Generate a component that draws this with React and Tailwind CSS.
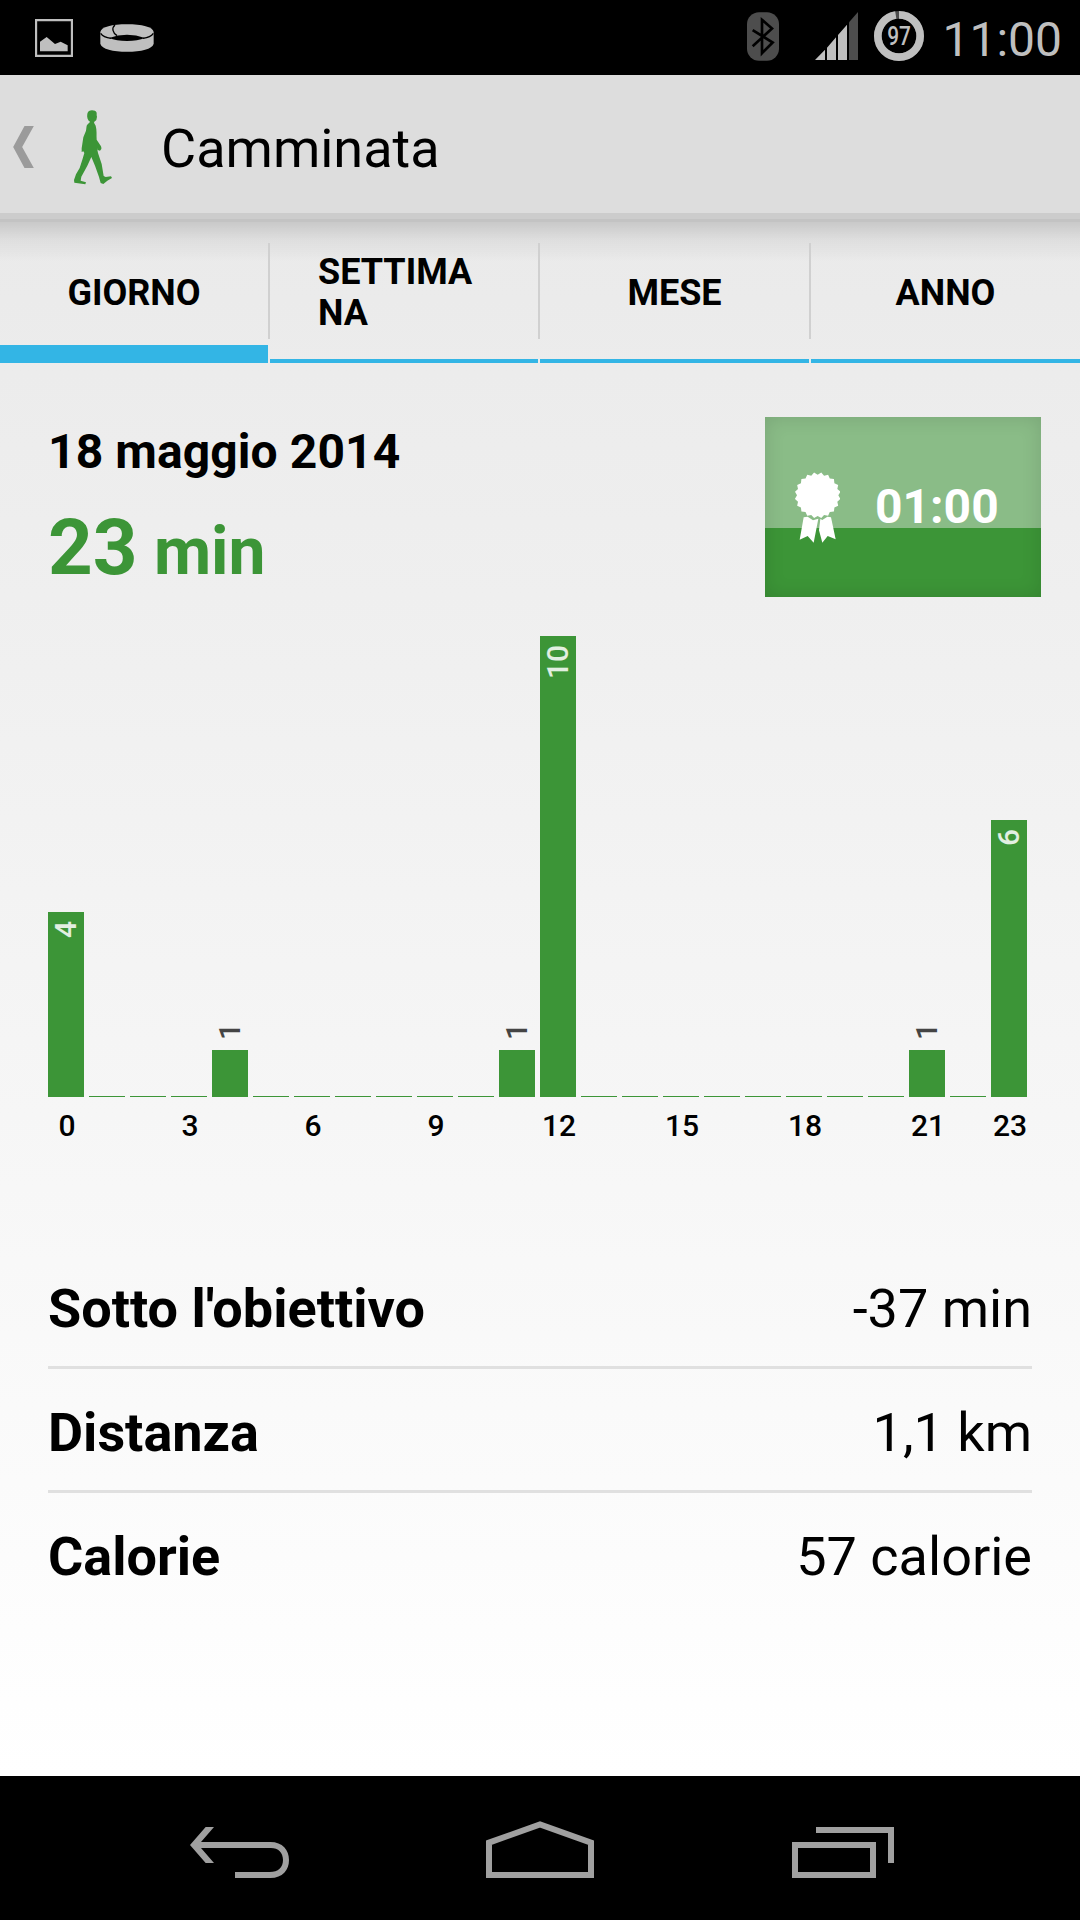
const minutesPerHour = [4, 0, 0, 0, 1, 0, 0, 0, 0, 0, 0, 1, 10, 0, 0, 0, 0, 0, 0, 0, 0, 1, 0, 6];
const axisHours = [0, 3, 6, 9, 12, 15, 18, 21, 23];
const UNIT = 46.1; // px per minute

const tabs = ["GIORNO", "SETTIMANA", "MESE", "ANNO"];

const details = [
  { label: "Sotto l'obiettivo", value: "-37 min" },
  { label: "Distanza", value: "1,1 km" },
  { label: "Calorie", value: "57 calorie" },
];

// Status bar icons
const PictureIcon = () => (
  <svg className="w-[38px] h-[38px]" viewBox="0 0 114 114">
    <path d="M3 3H111V111H3Z" fill="none" stroke="#bfbfbf" strokeWidth="7" />
    <path d="M15 68 35 54 60 75 77 68 98 79V97H15Z" fill="#bfbfbf" />
  </svg>
);

const BandIcon = () => (
  <svg className="w-[54px] h-[28px]" viewBox="299 75 162 84">
    <path d="M300 99C302 84 336 76 380 76S458 84 460 99V134C456 150 422 158 380 158S304 150 300 134Z" fill="#bfbfbf" />
    <path d="M326 117Q380 98 434 117Q412 126 380 126T326 117Z" fill="#000" />
    <path d="M301 103Q309 115 332 118M459 103Q451 115 428 118M344 78C333 87 337 102 350 110" fill="none" stroke="#000" strokeWidth="4" />
  </svg>
);

const BluetoothIcon = () => (
  <svg className="w-[32px] h-[49px]" viewBox="81 36 96 146">
    <rect x="81" y="36" width="96" height="146" rx="36" fill="#4d4d4d" />
    <path d="M98 90 158 127 126 159V59L156 85 98 138" fill="none" stroke="#000" strokeWidth="8" />
  </svg>
);

const SignalIcon = () => (
  <svg className="w-[43px] h-[48px]" viewBox="285 36 129 144">
    <path d="M285 180 315 149V180ZM321 180V143L348 112V180ZM354 180V105L381 74V180Z" fill="#bfbfbf" />
    <path d="M387 180V67L414 36V180Z" fill="#4d4d4d" />
  </svg>
);

const BatteryIcon = () => (
  <svg className="w-[50px] h-[50px]" viewBox="0 0 150 150">
    <circle cx="75" cy="75" r="63.5" fill="none" stroke="#4d4d4d" strokeWidth="23" />
    <circle
      cx="75"
      cy="75"
      r="63.5"
      fill="none"
      stroke="#bfbfbf"
      strokeWidth="23"
      pathLength="100"
      strokeDasharray="97 3"
      transform="rotate(-90 75 75)"
    />
    <text
      x="75"
      y="102"
      textAnchor="middle"
      textLength="71"
      lengthAdjust="spacingAndGlyphs"
      fontFamily="Roboto"
      fontSize="76"
      fontWeight="500"
      fill="#bfbfbf"
    >
      97
    </text>
  </svg>
);

// Header icons
const UpIcon = () => (
  <svg className="w-[21px] h-[42px]" viewBox="39 378 62 126">
    <path d="M73 378H101L66 441 101 504H73L39 441Z" fill="#9b9b9b" />
  </svg>
);

const WalkIcon = () => (
  <svg className="w-[38px] h-[75px]" viewBox="222 329 114 225" fill="#3c9537">
    <path d="M262 340C264 333 269 330 276 330C283 330 288 332 290 337L290 345 291 349 289 359C286 363 283 363 282 367L287 376C291 390 289 404 290 418L300 433C303 437 305 441 304 446L300 451 293 449 291 443 294 458 305 491 311 527 317 530 333 528 336 533 322 541 310 551 302 548 297 530 285 496 274 470 262 496 244 529 242 541 258 546 256 552 223 547 222 539 228 522 239 503 247 478 253 458 250 453 245 455 245 444 250 411 258 391 260 376C263 370 268 368 270 364C263 360 260 350 262 340Z" />
  </svg>
);

// Scalloped rosette outline
const rosette = Array.from({ length: 40 }, (_, i) => {
  const angle = (i * Math.PI) / 20 - Math.PI / 2;
  const r = i % 2 ? 69 : 62;
  return `${(233 + r * Math.cos(angle)).toFixed(1)},${(286 + r * Math.sin(angle)).toFixed(1)}`;
}).join(" ");

const BadgeIcon = () => (
  <svg className="w-[45px] h-[71px]" viewBox="165 216 135 213" fill="#fff">
    <polygon points={rosette} />
    <path d="M191 352 203 350 219 361 235 356 221 428 203 408 179 419Z" />
    <path d="M241 357 247 360 262 350 273 352 287 418 263 408 247 428 237 391Z" />
  </svg>
);

// Navigation bar icons
const BackIcon = () => (
  <svg className="w-[99px] h-[51px]" viewBox="90 201 297 153" fill="#a0a0a0">
    <path d="M90 255 137 201H162L123 246H331C368 246 387 270 387 300S368 354 331 354H225V336H329C355 336 369 322 369 300S355 264 333 264H123L162 309H137Z" />
  </svg>
);

const HomeIcon = () => (
  <svg className="w-[108px] h-[57px]" viewBox="978 183 324 171">
    <path d="M987 248 1140 193 1293 248V345H987Z" fill="none" stroke="#a0a0a0" strokeWidth="18" />
  </svg>
);

const RecentsIcon = () => (
  <svg className="w-[102px] h-[51px]" viewBox="276 201 306 153" fill="none" stroke="#a0a0a0" strokeWidth="18">
    <path d="M285 255H519V345H285ZM348 210H573V309" />
  </svg>
);

const Bar = ({ value }) => {
  const inside = value > 1;
  return (
    <div className="flex flex-col items-center w-9">
      {value > 0 && !inside && (
        <span className="mb-[10px] rotate-180 [writing-mode:vertical-rl] leading-9 text-[#444]">{value}</span>
      )}
      <div
        className="flex items-start justify-center w-full bg-[#3c9537]"
        style={{ height: Math.max(1, Math.ceil(value * UNIT)), paddingTop: inside ? 9 : 0 }}
      >
        {inside && <span className="rotate-180 [writing-mode:vertical-rl] leading-9 text-white/85">{value}</span>}
      </div>
    </div>
  );
};

export default function App() {
  return (
    <div className="flex flex-col w-[1080px] h-[1920px] bg-black font-[Roboto,sans-serif] text-black overflow-hidden">
      {/* Status bar */}
      <div className="flex items-start h-[75px] shrink-0 pl-[35px] pr-[18px]">
        <div className="flex items-center gap-[27px] pt-[19px]">
          <PictureIcon />
          <BandIcon />
        </div>
        <div className="flex items-start ml-auto pt-[11px]">
          <div className="mt-px mr-[36px]">
            <BluetoothIcon />
          </div>
          <div className="mt-px mr-[16px]">
            <SignalIcon />
          </div>
          <BatteryIcon />
          <span className="ml-[18px] mt-[4px] text-5xl leading-[50px] text-[#bfbfbf]">11:00</span>
        </div>
      </div>

      {/* Action bar */}
      <header className="flex items-center h-[147px] shrink-0 pl-[13px] pb-[3px] bg-[linear-gradient(#ddd_138px,#ccc_138px,#ccc_144px,#c3c3c3_144px)]">
        <UpIcon />
        <div className="ml-[40px]">
          <WalkIcon />
        </div>
        <h1 className="ml-[49px] pt-[4px] text-[54px] leading-[60px]">Camminata</h1>
      </header>

      <main className="flex flex-col flex-1 bg-linear-to-b from-[#eaeaea] to-white">
        {/* Tabs */}
        <nav className="grid grid-cols-[268px_2px_268px_2px_269px_2px_269px] h-[141px] shrink-0 bg-[linear-gradient(rgba(0,0,0,.14),rgba(0,0,0,.05)_18px,transparent_40px)]">
          {tabs.map((tab, i) => (
            <div key={tab} className="contents">
              {i > 0 && <div className="h-24 mt-[21px] bg-[#d0d0d0]" />}
              <div
                className={
                  i === 0
                    ? "flex items-center justify-center px-12 pt-px shadow-[inset_0_-18px_0_#33b5e5]"
                    : "flex items-center justify-center px-12 pt-px shadow-[inset_0_-4px_0_#33b5e5]"
                }
              >
                <span className="text-4xl leading-[41px] font-bold break-all">{tab}</span>
              </div>
            </div>
          ))}
        </nav>

        {/* Summary */}
        <section className="flex justify-between pt-[54px] pl-12 pr-[39px]">
          <div>
            <h2 className="mt-[7px] text-5xl leading-14 font-bold tracking-[0.1px]">18 maggio 2014</h2>
            <p className="mt-[22px] h-[92px] text-[78px] leading-[92px] font-bold text-[#3c9537]">
              23<span className="text-[66px] leading-none"> min</span>
            </p>
          </div>
          <div className="flex items-center gap-[35px] w-[276px] h-[180px] pl-[30px] bg-[linear-gradient(#8abc87_111px,#3c9537_111px)] shadow-[inset_0_0_20px_rgba(0,0,0,.12)]">
            <BadgeIcon />
            <span className="text-5xl font-bold text-white">01:00</span>
          </div>
        </section>

        {/* Hourly chart */}
        <section className="mt-[39px] px-12 text-3xl font-medium">
          <div className="flex items-end gap-[5px] h-[461px]">
            {minutesPerHour.map((value, hour) => (
              <Bar key={hour} value={value} />
            ))}
          </div>
          <div className="flex gap-[5px] h-9 mt-[11px] pl-px leading-9">
            {minutesPerHour.map((_, hour) => (
              <span key={hour} className="w-9 shrink-0 text-center">
                {axisHours.includes(hour) ? hour : ""}
              </span>
            ))}
          </div>
        </section>

        {/* Details */}
        <section className="mt-[101px] px-12">
          {details.map(({ label, value }, i) => (
            <div
              key={label}
              className={
                i < details.length - 1
                  ? "flex items-center justify-between h-[124px] pt-1.5 text-[54px] border-b-3 border-[#e0e0e0]"
                  : "flex items-center justify-between h-[121px] pt-1.5 text-[54px]"
              }
            >
              <span className="font-bold">{label}</span>
              <span>{value}</span>
            </div>
          ))}
        </section>
      </main>

      {/* Navigation bar */}
      <footer className="flex items-end h-36 shrink-0 pl-[190px] pb-[42px]">
        <BackIcon />
        <div className="ml-[197px]">
          <HomeIcon />
        </div>
        <div className="ml-[198px]">
          <RecentsIcon />
        </div>
      </footer>
    </div>
  );
}
